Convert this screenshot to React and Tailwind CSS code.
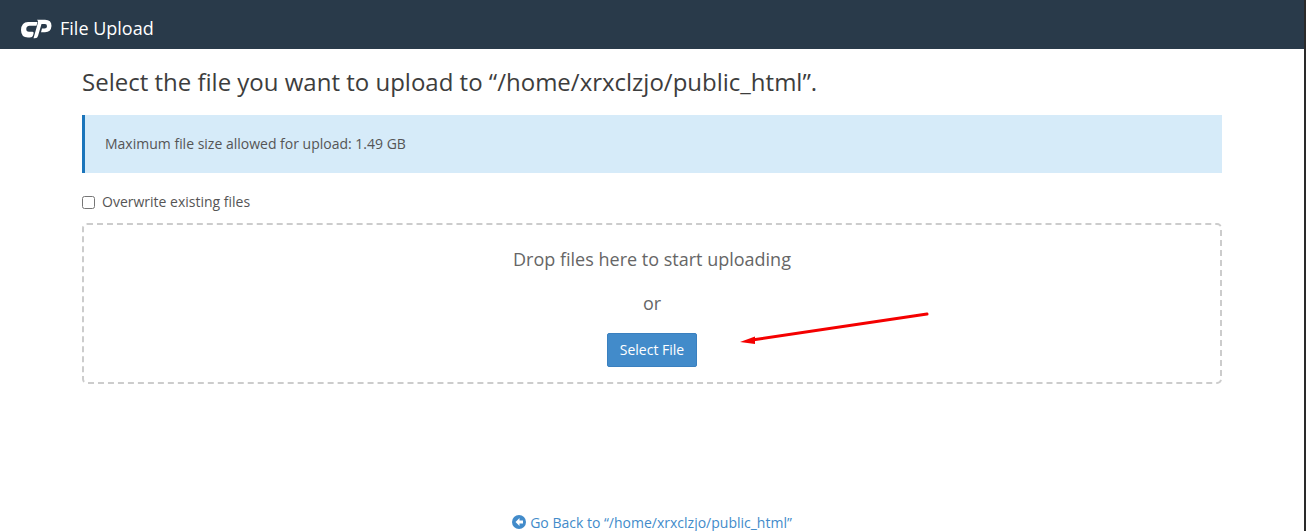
// App.jsx

function CpanelLogo() {
  return (
    <svg width="31" height="20" viewBox="0 0 31 20" fill="#fff" aria-hidden="true">
      <path d="M7 3H16.500L15.500 6.800H8.500Q5.800 6.800 5.300 9.500Q5 12.800 8 12.800H11.500Q13 12.800 12.600 14.300L12 16.500Q11.500 18.500 9 18.500H7Q0 18.500 0 11Q.5 3 7 3z" />
      <path d="M17 .8H24Q30.500 .8 30.500 7Q30 13.200 24 13.200H20L21 9.500H23.500Q26 9.500 26 7.200Q26 5 24 5H20.500L17 17Q16.500 19.300 14 19.300H12.500L17 3.500Q17.300 2 16 .8z" />
    </svg>
  );
}

export default function App() {
  return (
    <div className="relative h-[531px] overflow-hidden bg-white font-['Open_Sans',sans-serif] border-r-2 border-[#2a2a2a]">
      {/* Header */}
      <header className="flex h-[49px] items-center bg-[#293a4a] pl-[21px] pt-[8px]">
        <CpanelLogo />
        <h1 className="ml-[8px] text-[18px] text-white">File Upload</h1>
      </header>

      {/* Main */}
      <main className="mx-[82px] w-[1140px]">
        <h2 className="mt-[16px] h-[34px] text-[24px] leading-[34px] text-[#3d3d3d]">
          Select the file you want to upload to “/home/xrxclzjo/public_html”.
        </h2>

        <div className="mt-[16px] flex h-[58px] items-center border-l-[3px] border-[#1b75bb] bg-[#d6ebf9] pb-[2px] pl-[20px] text-[14px] text-[#555]">
          Maximum file size allowed for upload: 1.49 GB
        </div>

        <label className="mt-[19px] flex h-[20px] items-center text-[14px] text-[#555]">
          <input type="checkbox" className="h-[13px] w-[13px]" />
          <span className="ml-[7px] -translate-y-px">Overwrite existing files</span>
        </label>

        <div className="mt-[11px] flex h-[161px] flex-col items-center rounded-[5px] border-2 border-dashed border-[#ccc] text-[18px] text-[#666]">
          <p className="mt-[21px] leading-[26px]">Drop files here to start uploading</p>
          <p className="mt-[18px] leading-[26px]">or</p>
          <button className="mt-[17px] h-[34px] w-[90px] rounded-[2px] border border-[#3a80bf] bg-[#428bca] pb-[2px] text-[14px] text-white">
            Select File
          </button>
        </div>

        <a className="mt-[129px] flex items-center justify-center text-[14px] leading-[20px] text-[#428bca]" href="#">
          <svg width="14" height="14" viewBox="0 0 14 14" className="mr-[4px] -translate-y-px" aria-hidden="true">
            <circle cx="7" cy="7" r="7" fill="#428bca" />
            <path d="M7.500 3 3.500 7l4 4V8.500h3.500v-3H7.500z" fill="#fff" />
          </svg>
          Go Back to “/home/xrxclzjo/public_html”
        </a>
      </main>

      {/* Red annotation arrow over the page */}
      <svg className="absolute left-0 top-0" width="1306" height="531" fill="none" aria-hidden="true">
        <path d="M927 314 752 340" stroke="#f40000" strokeWidth="3" strokeLinecap="round" />
        <path d="M740 342 755 336.500 755 344z" fill="#f40000" />
      </svg>
    </div>
  );
}
